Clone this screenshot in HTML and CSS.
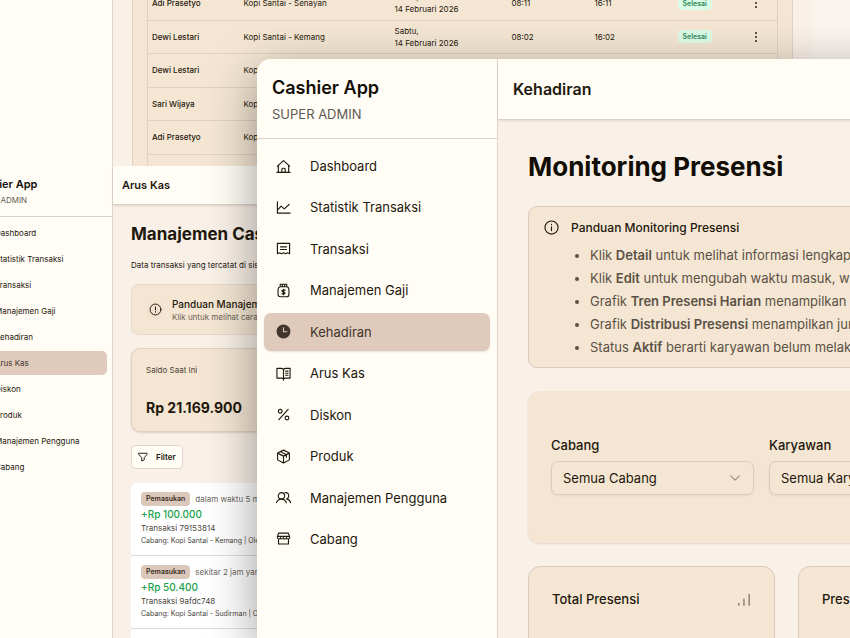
FILE: index.html
```html
<!DOCTYPE html>
<html lang="id">
<head>
    <meta charset="UTF-8">
    <meta name="viewport" content="width=device-width, initial-scale=1.0">
    <title>Cashier App</title>
    <link rel="stylesheet" href="styles.css">
</head>
<body>
    <!-- Attendance table window -->
    <section class="window window-table">
        <div class="side"></div>
        <div class="table-area">
            <div class="table-card">
                <table class="attendance">
                    <tbody>
                        <tr>
                            <th scope="row">Adi Prasetyo</th>
                            <td>Kopi Santai - Senayan</td>
                            <td>Sabtu,<br>14 Februari 2026</td>
                            <td>08:11</td>
                            <td>16:11</td>
                            <td><span class="status">Selesai</span></td>
                            <td><button class="more" aria-label="Menu"><i></i><i></i><i></i></button></td>
                        </tr>
                        <tr>
                            <th scope="row">Dewi Lestari</th>
                            <td>Kopi Santai - Kemang</td>
                            <td>Sabtu,<br>14 Februari 2026</td>
                            <td>08:02</td>
                            <td>16:02</td>
                            <td><span class="status">Selesai</span></td>
                            <td><button class="more" aria-label="Menu"><i></i><i></i><i></i></button></td>
                        </tr>
                        <tr>
                            <th scope="row">Dewi Lestari</th>
                            <td>Kopi</td>
                            <td></td>
                            <td></td>
                            <td></td>
                            <td></td>
                            <td></td>
                        </tr>
                        <tr>
                            <th scope="row">Sari Wijaya</th>
                            <td>Kopi</td>
                            <td></td>
                            <td></td>
                            <td></td>
                            <td></td>
                            <td></td>
                        </tr>
                        <tr>
                            <th scope="row">Adi Prasetyo</th>
                            <td>Kopi</td>
                            <td></td>
                            <td></td>
                            <td></td>
                            <td></td>
                            <td></td>
                        </tr>
                        <tr>
                            <th scope="row"></th>
                            <td></td>
                            <td></td>
                            <td></td>
                            <td></td>
                            <td></td>
                            <td></td>
                        </tr>
                    </tbody>
                </table>
            </div>
        </div>
    </section>

    <!-- Cash flow window -->
    <section class="window window-cash">
        <aside class="side">
            <div class="brand">
                <strong>Cashier App</strong>
                <span>SUPER ADMIN</span>
            </div>
            <nav class="menu">
                <a href="#">Dashboard</a>
                <a href="#">Statistik Transaksi</a>
                <a href="#">Transaksi</a>
                <a href="#">Manajemen Gaji</a>
                <a href="#">Kehadiran</a>
                <a href="#" class="active">Arus Kas</a>
                <a href="#">Diskon</a>
                <a href="#">Produk</a>
                <a href="#">Manajemen Pengguna</a>
                <a href="#">Cabang</a>
            </nav>
        </aside>
        <div class="main">
            <header class="topbar">Arus Kas</header>
            <div class="content">
                <h2>Manajemen Cash</h2>
                <p class="lead">Data transaksi yang tercatat di sistem</p>
                <div class="guide">
                    <span class="guide-icon">
                        <svg viewBox="0 0 16 16"><circle cx="8" cy="8" r="6.7"/><path d="M8 4.8v3.8M8 10.6v.8"/></svg>
                    </span>
                    <div>
                        <h3>Panduan Manajemen</h3>
                        <p>Klik untuk melihat cara</p>
                    </div>
                </div>
                <div class="balance">
                    <p>Saldo Saat Ini</p>
                    <strong>Rp 21.169.900</strong>
                </div>
                <button class="filter">
                    <svg viewBox="0 0 16 16"><path d="M1.500 2h13v2L10 9v3.500L6 14.500V9L1.500 4z"/></svg>
                    Filter
                </button>
                <ul class="entries">
                    <li>
                        <div class="entry-top"><span class="tag">Pemasukan</span>dalam waktu 5 menit</div>
                        <p class="amount">+Rp 100.000</p>
                        <p class="entry-name">Transaksi 79153814</p>
                        <p class="entry-meta">Cabang: Kopi Santai - Kemang | Oleh</p>
                    </li>
                    <li>
                        <div class="entry-top"><span class="tag">Pemasukan</span>sekitar 2 jam yang</div>
                        <p class="amount">+Rp 50.400</p>
                        <p class="entry-name">Transaksi 9afdc748</p>
                        <p class="entry-meta">Cabang: Kopi Santai - Sudirman | Oleh</p>
                    </li>
                    <li>
                        <div class="entry-top"><span class="tag">Pemasukan</span></div>
                    </li>
                </ul>
            </div>
        </div>
    </section>

    <!-- Attendance monitoring window -->
    <section class="window window-front">
        <aside class="side">
            <div class="brand">
                <strong>Cashier App</strong>
                <span>SUPER ADMIN</span>
            </div>
            <nav class="menu">
                <a href="#">
                    <svg viewBox="0 0 16 16"><path d="M1 14.300h14M2.500 14V7M13.500 14V7M1.500 7.600 8 1.800l6.500 5.800M6.200 14v-3.200q0-1 1-1h1.600q1 0 1 1V14"/></svg>
                    Dashboard
                </a>
                <a href="#">
                    <svg viewBox="0 0 16 16"><path d="M1.500 2v12h13.500M1.800 10.500 5.500 6.600l3.300 2.800 5.200-4.600"/></svg>
                    Statistik Transaksi
                </a>
                <a href="#">
                    <svg viewBox="0 0 16 16"><path d="M1.500 13.500v-11h13v11l-2.200-1-2.100 1-2.200-1-2.200 1-2.100-1zM4.800 6.200h6.400M4.800 9h6.400"/></svg>
                    Transaksi
                </a>
                <a href="#">
                    <svg viewBox="0 0 16 16"><path d="M4.500 4h7q2.300.5 2.300 3v5.200q0 2.500-2.500 2.500H4.700q-2.500 0-2.500-2.500V7q0-2.500 2.300-3zM4.500 4V1.300h7V4M6.800 1.500V4M9.200 1.500V4M9.700 7.600H7.600q-1.200 0-1.200 1t1.200 1h.8q1.200 0 1.200 1t-1.200 1H6.300M8 6.600v6"/></svg>
                    Manajemen Gaji
                </a>
                <a href="#" class="active">
                    <svg viewBox="0 0 16 16"><circle class="solid" cx="8" cy="8" r="6.800"/><path class="hand" d="M8 4v4.200h3.600"/></svg>
                    Kehadiran
                </a>
                <a href="#">
                    <svg viewBox="0 0 16 16"><path d="M8 3.800Q7.200 2.500 5.500 2.500H1v10.400h5q1.500 0 2 1 .5-1 2-1h5V2.500h-4.500Q8.800 2.500 8 3.800zM8 3.800V15M10.300 5.500h2.500M10.300 7.700h2.500M10.300 9.900h2.500"/></svg>
                    Arus Kas
                </a>
                <a href="#">
                    <svg viewBox="0 0 16 16"><path d="M13 2.500l-10 11"/><circle cx="4.500" cy="4.500" r="2"/><circle cx="11.700" cy="11.700" r="2"/></svg>
                    Diskon
                </a>
                <a href="#">
                    <svg viewBox="0 0 16 16"><path d="M8 1.200l6.300 3v7.400L8 14.900l-6.300-3.300V4.200zM1.700 4.400 8 7.600l6.300-3.200M8 7.600v7.300M4.700 2.800l6.400 3.300v2.700"/></svg>
                    Produk
                </a>
                <a href="#">
                    <svg viewBox="0 0 16 16"><circle cx="5.800" cy="6.200" r="3.400"/><path d="M.5 13.500Q2 9.700 5.800 9.700t5.300 3.800M9.600 2.900q3.800-.6 4 3.200 0 1.700-1.300 2.800M11.300 9.500q3 .3 4.200 4"/></svg>
                    Manajemen Pengguna
                </a>
                <a href="#">
                    <svg viewBox="0 0 16 16"><path d="M2.800 2.200h10.400L14.500 6v1q0 1.500-1.600 1.500T11.200 7q0 1.500-1.600 1.500T8 7q0 1.500-1.600 1.500T4.800 7q0 1.500-1.600 1.500T1.500 7V6zM1.600 5.700h12.800M2.700 8.500v5.300h10.600V8.500"/></svg>
                    Cabang
                </a>
            </nav>
        </aside>
        <div class="main">
            <header class="topbar">Kehadiran</header>
            <div class="content">
                <h1>Monitoring Presensi</h1>
                <div class="guide">
                    <svg viewBox="0 0 16 16"><circle cx="8" cy="8" r="7"/><path d="M8 7.300v4M8 4.700v.4"/></svg>
                    <div>
                        <h3>Panduan Monitoring Presensi</h3>
                        <ul>
                            <li>Klik <b>Detail</b> untuk melihat informasi lengkap</li>
                            <li>Klik <b>Edit</b> untuk mengubah waktu masuk, waktu</li>
                            <li>Grafik <b>Tren Presensi Harian</b> menampilkan</li>
                            <li>Grafik <b>Distribusi Presensi</b> menampilkan jumlah</li>
                            <li>Status <b>Aktif</b> berarti karyawan belum melakukan</li>
                        </ul>
                    </div>
                </div>
                <form class="filters">
                    <div class="field">
                        <label for="cabang">Cabang</label>
                        <div class="select">
                            <select id="cabang"><option>Semua Cabang</option></select>
                            <svg viewBox="0 0 16 16"><path d="M3 5.500l5 5 5-5"/></svg>
                        </div>
                    </div>
                    <div class="field">
                        <label for="karyawan">Karyawan</label>
                        <div class="select">
                            <select id="karyawan"><option>Semua Karyawan</option></select>
                            <svg viewBox="0 0 16 16"><path d="M3 5.500l5 5 5-5"/></svg>
                        </div>
                    </div>
                </form>
                <div class="stats">
                    <div class="stat">
                        Total Presensi
                        <svg viewBox="0 0 16 16"><path d="M3 14v-2M8.500 14V7.500M14 14V2.500"/></svg>
                    </div>
                    <div class="stat">Presensi</div>
                    <div class="stat"></div>
                    <div class="stat"></div>
                </div>
            </div>
        </div>
    </section>
</body>
</html>
```

FILE: styles.css
```css
* {
    box-sizing: border-box;
    margin: 0;
    padding: 0;
}

body {
    position: relative;
    height: 100vh;
    overflow: hidden;
    background: #fbf4ee;
    color: #1f180d;
    font-family: Inter, "Liberation Sans", sans-serif;
}

a {
    color: inherit;
    text-decoration: none;
}

button, select {
    font: inherit;
    color: inherit;
}

svg {
    display: block;
    flex: none;
    fill: none;
    stroke: currentColor;
    stroke-width: 1.2;
    stroke-linecap: round;
    stroke-linejoin: round;
}

.window {
    position: absolute;
    display: flex;
    background: #f9f0e8;
    white-space: nowrap;
}

.side {
    flex: none;
    background: #fffdf6;
    border-right: 1px solid #e2d5cd;
}

.main {
    flex: 1;
}

.topbar {
    display: flex;
    align-items: center;
    background: #fffdf6;
    border-bottom: 1px solid #ddd0c8;
    box-shadow: 0 1px 2px rgba(60, 40, 20, 0.12);
    font-weight: 600;
}

.brand {
    display: flex;
    flex-direction: column;
    border-bottom: 1px solid #ddd0c8;
}

.brand strong {
    font-weight: 600;
    color: #120d05;
}

.brand span {
    color: #5f5a52;
}

.menu a {
    display: flex;
    align-items: center;
}

.menu .active {
    background: #dfcabb;
    color: #40362b;
}

/* Table window */
.window-table {
    top: -14px;
    left: -38px;
    width: 850px;
    height: 300px;
    font-size: 8px;
    line-height: 12px;
}

.window-table .side,
.window-cash .side {
    width: 151px;
}

.table-area {
    flex: 1;
    padding: 0 19px;
}

.table-card {
    height: 100%;
    padding: 0 14px;
    background: #f4e6d3;
    border: 1px solid #e0d1c5;
    border-width: 0 1px;
}

.attendance {
    width: 100%;
    height: 202px;
    table-layout: fixed;
    border-collapse: collapse;
    border: 1px solid #e0d1c5;
}

.attendance tr {
    height: 33px;
    border-bottom: 1px solid #e0d1c5;
}

.attendance th,
.attendance td {
    padding: 0 4px;
    text-align: left;
    font-weight: 400;
}

.attendance th {
    width: 92px;
    font-weight: 500;
}

.attendance td:nth-child(2) {
    width: 151px;
}

.attendance td:nth-child(3) {
    width: 117px;
}

.attendance td:nth-child(4),
.attendance td:nth-child(5) {
    width: 83px;
}

.status {
    padding: 2px 5px;
    background: #dcfbe7;
    border-radius: 4px;
    color: #2f8a57;
    font-size: 7px;
    font-weight: 600;
}

.more {
    display: flex;
    flex-direction: column;
    gap: 2px;
    margin-left: 25px;
    background: none;
    border: 0;
}

.more i {
    width: 2px;
    height: 2px;
    border-radius: 50%;
    background: #2a2116;
}

/* Cash flow window */
.window-cash {
    top: 166px;
    bottom: 0;
    left: -38px;
    width: 850px;
    overflow: hidden;
    font-size: 8px;
    line-height: 12px;
}

.window-cash .brand {
    height: 51px;
    padding: 10px 10px 0;
    gap: 2px;
}

.window-cash .brand strong {
    font-size: 11px;
    line-height: 16px;
}

.window-cash .menu {
    display: grid;
    gap: 2px;
    padding: 4px 5px;
}

.window-cash .menu a {
    height: 24px;
    padding-left: 28px;
    border-radius: 5px;
}

.window-cash .topbar {
    height: 39px;
    padding-left: 9px;
    font-size: 11px;
}

.window-cash .content {
    padding: 17px 18px;
}

.window-cash h2 {
    font-size: 17px;
    line-height: 24px;
}

.lead {
    margin-top: 13px;
}

.window-cash .guide {
    display: flex;
    align-items: center;
    height: 51px;
    margin-top: 13px;
    padding-left: 14px;
    gap: 8px;
    background: #f4e6d3;
    border: 1px solid #e6d8c9;
    border-radius: 7px;
}

.guide-icon {
    display: grid;
    place-items: center;
    width: 18px;
    height: 18px;
    border-radius: 50%;
    background: #f3e2ce;
}

.guide-icon svg {
    width: 13px;
    height: 13px;
}

.window-cash h3 {
    font-size: 10px;
    font-weight: 500;
    line-height: 14px;
}

.window-cash .guide p {
    color: #6b6256;
}

.balance {
    height: 84px;
    margin-top: 13px;
    padding: 15px 14px;
    background: #f4e6d3;
    border: 1px solid #dfd0c0;
    border-radius: 9px;
    box-shadow: 0 1px 2px rgba(60, 40, 20, 0.15);
}

.balance p {
    color: #4c4336;
}

.balance strong {
    display: block;
    margin-top: 22px;
    font-size: 14px;
    line-height: 20px;
}

.filter {
    display: flex;
    align-items: center;
    gap: 8px;
    height: 24px;
    margin-top: 13px;
    padding: 0 6px;
    background: #fffdf6;
    border: 1px solid #e2d5cd;
    border-radius: 5px;
    font-weight: 600;
}

.filter svg {
    width: 10px;
    height: 10px;
    stroke-width: 1.5;
}

.entries {
    margin-top: 14px;
    background: #fff;
    border-radius: 5px;
    list-style: none;
    color: #4a4740;
}

.entries li {
    height: 73px;
    padding: 9px 10px 0;
    border-bottom: 1px solid #dcdcdc;
}

.entry-top {
    display: flex;
    align-items: center;
    gap: 5px;
    height: 14px;
    color: #6b6760;
}

.tag {
    padding: 1px 5px;
    background: #dcc8ba;
    border-radius: 4px;
    color: #3a2f24;
    font-size: 7px;
    font-weight: 600;
}

.amount {
    color: #1ba24c;
    font-size: 10px;
    font-weight: 500;
    line-height: 17px;
}

.entry-name {
    line-height: 10px;
}

.entry-meta {
    margin-top: 2px;
    font-size: 7px;
}

/* Front window */
.window-front {
    top: 59px;
    bottom: 0;
    left: 257px;
    width: 1358px;
    overflow: hidden;
    border-top-left-radius: 14px;
    box-shadow: 0 14px 50px rgba(0, 0, 0, 0.4);
    font-size: 13px;
    line-height: 20px;
}

.window-front .side {
    width: 241px;
}

.window-front .brand {
    height: 80px;
    padding: 17px 15px 0;
    gap: 4px;
}

.window-front .brand strong {
    font-size: 18px;
    line-height: 24px;
}

.window-front .menu {
    display: flex;
    flex-direction: column;
    justify-content: space-between;
    height: 426px;
    padding: 8px 7px 7px;
}

.window-front .menu a {
    height: 38px;
    padding-left: 12px;
    gap: 19px;
    border-radius: 7px;
}

.window-front .menu .active {
    box-shadow: 0 1px 2px rgba(60, 40, 20, 0.12);
}

.window-front .menu svg {
    width: 15px;
    height: 15px;
}

.solid {
    fill: currentColor;
}

.hand {
    stroke: #dfcabb;
}

.window-front .topbar {
    height: 61px;
    padding-left: 15px;
    font-size: 16px;
}

.window-front .content {
    padding: 29px 30px;
}

h1 {
    color: #120d05;
    font-size: 26px;
    line-height: 36px;
}

.window-front .guide {
    display: flex;
    gap: 12px;
    margin-top: 21px;
    padding: 11px 15px 8px;
    background: #f4e6d3;
    border: 1px solid #dccabd;
    border-radius: 9px;
}

.window-front .guide svg {
    width: 15px;
    height: 15px;
    margin-top: 2px;
}

.window-front h3 {
    font-size: 12px;
    font-weight: 500;
}

.window-front .guide ul {
    margin-top: 6px;
    padding-left: 19px;
    color: #5b5145;
    line-height: 23px;
}

.window-front .guide b {
    font-weight: 600;
}

.filters {
    display: flex;
    gap: 15px;
    height: 152px;
    margin-top: 23px;
    padding: 44px 23px;
    background: #f4e6d3;
    border-radius: 12px;
    box-shadow: 0 1px 2px rgba(60, 40, 20, 0.12);
}

.field {
    width: 203px;
}

.field label {
    display: block;
    font-weight: 500;
}

.select {
    position: relative;
    margin-top: 6px;
}

.select select {
    appearance: none;
    display: block;
    width: 100%;
    height: 34px;
    padding: 0 11px;
    background: transparent;
    border: 1px solid #dccabd;
    border-radius: 7px;
    box-shadow: 0 1px 2px rgba(60, 40, 20, 0.08);
}

.select svg {
    position: absolute;
    top: 10px;
    right: 12px;
    width: 14px;
    height: 14px;
    color: #968b7e;
    pointer-events: none;
}

.stats {
    display: grid;
    grid-template-columns: repeat(4, 1fr);
    gap: 23px;
    margin-top: 23px;
}

.stat {
    display: flex;
    justify-content: space-between;
    height: 140px;
    padding: 22px 23px;
    background: #f4e6d3;
    border: 1px solid #dccabd;
    border-radius: 12px;
    font-weight: 500;
}

.stat svg {
    width: 15px;
    height: 15px;
    margin-top: 3px;
    color: #6b6256;
}
```
